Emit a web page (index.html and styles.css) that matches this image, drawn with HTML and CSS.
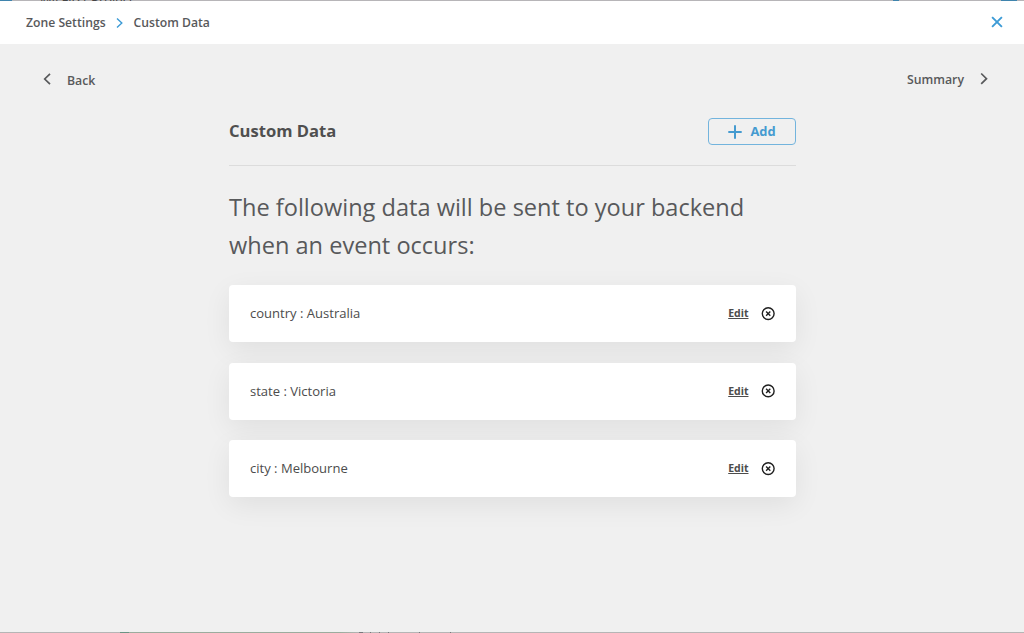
FILE: index.html
```html
<!DOCTYPE html>
<html lang="en">
<head>
<meta charset="utf-8">
<title>Custom Data</title>
<link rel="stylesheet" href="styles.css">
</head>
<body>
<div class="page">
  <div class="strip strip-top">
    <span class="strip-logo"></span>
    <span class="strip-project">My First Project</span>
    <span class="strip-dot"></span>
    <span class="strip-button"></span>
  </div>
  <header class="topbar">
    <nav class="crumbs">
      <span>Zone Settings</span>
      <svg class="crumb-arrow" viewBox="0 0 7 10"><path d="M1 .6 5.8 5 1 9.4"/></svg>
      <span>Custom Data</span>
    </nav>
    <svg class="close" viewBox="0 0 12 12"><path d="M1.1 1.1 10.9 10.9M10.9 1.1 1.1 10.9"/></svg>
  </header>
  <main class="body">
    <div class="pager">
      <a class="pager-link back"><svg class="chevron" viewBox="0 0 8 12"><path d="M7 .8 1.7 6 7 11.2"/></svg><span>Back</span></a>
      <a class="pager-link next"><span>Summary</span><svg class="chevron" viewBox="0 0 8 12"><path d="M1.2.5 6.5 5.7 1.2 10.9"/></svg></a>
    </div>
    <section class="content">
      <div class="heading">
        <h1 class="title">Custom Data</h1>
        <button class="add"><svg class="plus" viewBox="0 0 14 14"><path d="M7 .3v13.4M.3 7h13.4"/></svg><span>Add</span></button>
      </div>
      <p class="lead">The following data will be sent to your backend<br>when an event occurs:</p>
      <div class="cards">
        <div class="card"><span class="pair">country : Australia</span><a class="edit">Edit</a><svg class="remove" viewBox="0 0 14 14"><circle cx="7.2" cy="6.6" r="5.9"/><path d="m5.1 4.5 4.2 4.2m0-4.2L5.1 8.7"/></svg></div>
        <div class="card"><span class="pair">state : Victoria</span><a class="edit">Edit</a><svg class="remove" viewBox="0 0 14 14"><circle cx="7.2" cy="6.9" r="5.9"/><path d="m5.1 4.8 4.2 4.2m0-4.2L5.1 9"/></svg></div>
        <div class="card"><span class="pair">city : Melbourne</span><a class="edit">Edit</a><svg class="remove" viewBox="0 0 14 14"><circle cx="7.2" cy="6.6" r="5.9"/><path d="m5.1 4.5 4.2 4.2m0-4.2L5.1 8.7"/></svg></div>
      </div>
    </section>
  </main>
  <div class="strip strip-bottom">
    <span class="mark mark-wide"></span><span class="mark"></span><span class="mark"></span><span class="mark mark-far"></span><span class="mark mark-far"></span><span class="mark"></span>
  </div>
</div>
</body>
</html>
```
FILE: styles.css
```css
* { box-sizing: border-box; }
body { margin: 0; font-family: "Open Sans", "Noto Sans", sans-serif; color: #58595b; background: #f0f0f0; }
svg { display: block; flex: none; fill: none; stroke: currentColor; overflow: visible; }
.page { height: 633px; display: flex; flex-direction: column; overflow: hidden; }

.strip { height: 1px; flex: none; overflow: hidden; background: #b7b5b8; display: flex; align-items: flex-end; }
.strip-logo { width: 12px; height: 1px; background: #3f84ad; }
.strip-project { margin-left: 28px; font-size: 13px; line-height: 10px; height: 6px; color: #444; white-space: nowrap; }
.strip-dot { width: 6px; height: 1px; margin-left: auto; background: #3f84ad; }
.strip-button { width: 16px; height: 1px; margin: 0 7px 0 102px; background: #3f84ad; }
.strip-bottom { padding-left: 359px; background: linear-gradient(90deg, #b5b5b5 120px, #6a9384 120px, #6a9384 129px, #9bac9e 129px, #9bac9e 340px, #b5b5b5 360px); }
.mark { width: 1px; height: 1px; margin-right: 8px; background: #77777c; }
.mark-wide { width: 4px; margin-right: 7px; }
.mark-far { margin-right: 30px; }

.topbar { flex: none; height: 43px; padding: 0 21px 0 26px; display: flex; align-items: center; justify-content: space-between; background: #fff; }
.crumbs { display: flex; align-items: center; font-size: 12.2px; line-height: 18px; font-weight: 600; }
.crumb-arrow { width: 7px; height: 10px; margin: 0 11px 0 10px; color: #3c9bd6; stroke-width: 1.4; }
.close { width: 12px; height: 12px; margin-bottom: 1px; color: #3c9bd6; stroke-width: 1.9; }

.body { flex: 1; min-height: 0; }
.pager { height: 74px; padding: 26px 36px 0 43px; display: flex; justify-content: space-between; align-items: flex-start; }
.pager-link { display: flex; font-size: 12.3px; line-height: 18px; font-weight: 600; }
.chevron { width: 8px; height: 12px; margin-top: 3px; stroke-width: 1.7; }
.back { gap: 16px; }
.back span { padding-top: 2px; }
.next { gap: 16px; }
.next span { padding-top: 1px; }

.content { width: 567px; margin-left: 229px; }
.heading { height: 48px; display: flex; justify-content: space-between; align-items: flex-start; border-bottom: 1px solid #dcdcdc; }
.title { margin: 1px 0 0; font-size: 16.6px; line-height: 24px; font-weight: 700; color: #4f4f4f; }
.add { width: 88px; height: 27px; padding: 0; display: flex; align-items: center; justify-content: center; gap: 8px; border: 1px solid #73b4dd; border-radius: 4px; background: transparent; color: #459bd0; font: 700 12.9px/17px "Open Sans", sans-serif; }
.plus { width: 14px; height: 14px; stroke-width: 2; }
.lead { margin: 22px 0 0; font-size: 23.57px; line-height: 38px; }
.cards { margin-top: 21px; display: flex; flex-direction: column; gap: 20.7px; }
.card { height: 57px; padding: 0 21px; display: flex; align-items: center; border-radius: 4px; background: #fff; box-shadow: 0 8px 28px rgba(0, 0, 0, .07); }
.pair { flex: 1; margin-top: -1px; font-size: 13.05px; line-height: 18px; color: #4c4c4c; }
.edit { margin-top: -1px; font-size: 10.5px; line-height: 16px; font-weight: 700; color: #4c4c4c; text-decoration: underline; }
.remove { width: 14px; height: 14px; margin-left: 12.5px; color: #1f1f1f; stroke-width: 1.4; }
```
